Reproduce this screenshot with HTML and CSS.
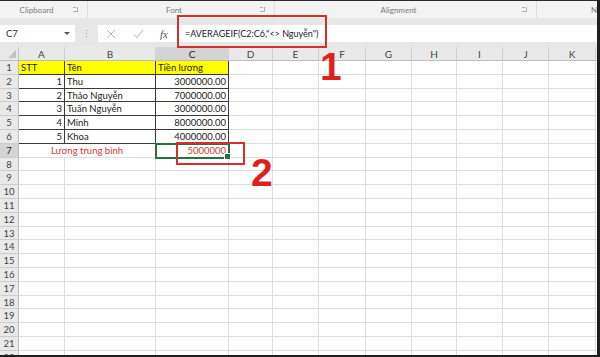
FILE: index.html
```html
<!DOCTYPE html>
<html lang="vi">
<head>
    <meta charset="UTF-8">
    <meta name="viewport" content="width=device-width, initial-scale=1.0">
    <title>AVERAGEIF</title>
    <link rel="stylesheet" href="styles.css">
</head>
<body>
    <div class="window">
        <div class="ribbon">
            <div class="group g-clip"><span class="glabel">Clipboard</span><span class="launch"></span></div>
            <div class="group g-font"><span class="glabel">Font</span><span class="launch"></span></div>
            <div class="group g-align"><span class="glabel">Alignment</span><span class="launch"></span></div>
            <div class="group g-num"><span class="glabel">N</span></div>
        </div>

        <div class="fbar">
            <div class="namebox"><span>C7</span><span class="caret"></span></div>
            <div class="grip"><i></i><i></i><i></i></div>
            <div class="fx-box">
                <svg class="ico ico-x" width="10" height="10" viewBox="0 0 10 10"><path d="M1 1L9 9M9 1L1 9" /></svg>
                <svg class="ico ico-ok" width="11" height="10" viewBox="0 0 11 10"><path d="M1 5.5L4 8.5L10 1" /></svg>
                <span class="fx">fx</span>
                <div class="formula">=AVERAGEIF(C2:C6,"&lt;&gt; Nguyễn")</div>
            </div>
        </div>

        <div class="sheet" id="sheet"></div>

        <div class="mark mark-formula"></div>
        <div class="mark mark-cell"></div>
        <div class="num num-1">1</div>
        <div class="num num-2">2</div>
    </div>

    <script>
        const cols = ['A', 'B', 'C', 'D', 'E', 'F', 'G', 'H', 'I', 'J', 'K'];
        const data = {
            1: [['STT', 'hd'], ['Tên', 'hd'], ['Tiền lương', 'hd']],
            2: [['1', 'r'], ['Thu', ''], ['3000000.00', 'r']],
            3: [['2', 'r'], ['Thảo Nguyễn', ''], ['7000000.00', 'r']],
            4: [['3', 'r'], ['Tuấn Nguyễn', ''], ['3000000.00', 'r']],
            5: [['4', 'r'], ['Minh', ''], ['8000000.00', 'r']],
            6: [['5', 'r'], ['Khoa', ''], ['4000000.00', 'r']]
        };

        const sheet = document.getElementById('sheet');

        function cell(cls, text) {
            const div = document.createElement('div');
            div.className = cls;
            if (text) div.textContent = text;
            sheet.appendChild(div);
            return div;
        }

        // hàng tiêu đề cột
        cell('corner');
        cols.forEach(c => cell(c === 'C' ? 'colhead active' : 'colhead', c));
        cell('colhead filler');

        for (let r = 1; r <= 22; r++) {
            cell(r === 7 ? 'rowhead active' : 'rowhead', String(r));
            if (data[r]) {
                data[r].forEach(([text, kind]) => cell('cell tb ' + kind, text));
                for (let i = 3; i < cols.length; i++) cell('cell');
            } else if (r === 7) {
                cell('cell merged red', 'Lương trung bình');
                cell('cell r red sel', '5000000');
                for (let i = 3; i < cols.length; i++) cell('cell');
            } else {
                cols.forEach(() => cell('cell'));
            }
            cell('cell filler');
        }
    </script>
</body>
</html>
```

FILE: styles.css
```css
* {
    margin: 0;
    padding: 0;
    box-sizing: border-box;
}

body {
    font-family: Lato, "Noto Sans", sans-serif;
    background: #fff;
}

.window {
    width: 600px;
    height: 357px;
    position: relative;
    overflow: hidden;
    display: flex;
    flex-direction: column;
    border-top: 1px solid #2b2b2b;
    border-right: 3px solid #1e1e1e;
    border-bottom: 2px solid #1e1e1e;
    background: #fff;
}

/* ribbon */
.ribbon {
    display: flex;
    height: 17px;
    flex: none;
    background: #f3f3f3;
    font-size: 8px;
    color: #7a7a7a;
}

.group {
    display: flex;
    align-items: center;
    border-right: 1px solid #dedede;
    overflow: hidden;
    white-space: nowrap;
}

.g-clip { width: 88px; }
.g-font { width: 187px; }
.g-align { width: 262px; }
.g-num {
    flex: 1;
    border-right: 0;
    padding-left: 54px;
}

.glabel {
    flex: 1;
    text-align: center;
}

.g-num .glabel { text-align: left; }

.launch {
    width: 5px;
    height: 5px;
    margin-right: 9px;
    border-right: 1px solid #b0b0b0;
    border-bottom: 1px solid #b0b0b0;
    position: relative;
}

.launch::after {
    content: "";
    position: absolute;
    left: 0;
    top: 0;
    width: 3px;
    height: 1px;
    background: #b0b0b0;
}

/* formula bar */
.fbar {
    display: flex;
    height: 29px;
    flex: none;
    padding: 7px 0 5px;
    background: #e7e7e7;
}

.namebox {
    width: 75px;
    display: flex;
    align-items: center;
    justify-content: space-between;
    padding: 0 5px 0 6px;
    background: #fff;
    font-size: 9.5px;
    color: #333;
}

.caret {
    width: 0;
    height: 0;
    border-left: 3px solid transparent;
    border-right: 3px solid transparent;
    border-top: 3px solid #555;
}

.grip {
    width: 23px;
    display: flex;
    flex-direction: column;
    align-items: center;
    justify-content: center;
    gap: 2px;
}

.grip i {
    width: 1px;
    height: 1px;
    background: #9a9a9a;
}

.fx-box {
    flex: 1;
    display: flex;
    align-items: center;
    background: #fff;
}

.ico {
    fill: none;
    stroke: #b5b5b5;
    stroke-width: 1;
}

.ico-x { margin-left: 8px; }
.ico-ok { margin-left: 17px; }

.fx {
    margin-left: 16px;
    font-family: "Liberation Serif", serif;
    font-style: italic;
    font-size: 11px;
    color: #555;
}

.formula {
    margin-left: 17px;
    font-size: 9px;
    color: #222;
    white-space: nowrap;
}

/* sheet */
.sheet {
    flex: 1;
    display: grid;
    grid-template-columns: 19px 46px 91px 73px 44px 46px 47px 46px 45px 46px 46px 47px 1fr;
    grid-template-rows: 14px;
    grid-auto-rows: 13.8px;
    overflow: hidden;
    font-size: 9.5px;
    color: #1c1c1c;
}

.corner {
    background: #e9e9e9;
    border-right: 1px solid #c4c4c4;
    border-bottom: 1px solid #bdbdbd;
    position: relative;
}

.corner::after {
    content: "";
    position: absolute;
    right: 2px;
    bottom: 2px;
    border-left: 8px solid transparent;
    border-bottom: 8px solid #c2c2c2;
}

.colhead {
    background: #e9e9e9;
    border-right: 1px solid #cfcfcf;
    border-bottom: 1px solid #bdbdbd;
    text-align: center;
    line-height: 14px;
    font-size: 10px;
    color: #444;
}

.colhead.active {
    background: #d4d4d4;
    color: #222;
}

.rowhead {
    background: #e9e9e9;
    border-right: 1px solid #bdbdbd;
    border-bottom: 1px solid #cdcdcd;
    text-align: center;
    line-height: 13px;
    font-size: 9.5px;
    color: #444;
}

.rowhead.active {
    background: #d4d4d4;
    color: #222;
}

.cell {
    border-right: 1px solid #dcdcdc;
    border-bottom: 1px solid #dcdcdc;
    padding: 0 2px;
    line-height: 13px;
    white-space: nowrap;
    overflow: hidden;
}

.filler { border-right: 0; }

.cell.tb {
    border-right-color: #3a3a3a;
    border-bottom-color: #3a3a3a;
}

.cell.hd { background: #ffff00; }
.cell.r { text-align: right; }

.cell.merged {
    grid-column: span 2;
    text-align: center;
}

.cell.red { color: #d23a32; }

.cell.sel {
    position: relative;
    overflow: visible;
    outline: 2px solid #217346;
    outline-offset: -1px;
}

.cell.sel::after {
    content: "";
    position: absolute;
    right: -3px;
    bottom: -3px;
    width: 5px;
    height: 5px;
    background: #217346;
    border: 1px solid #fff;
}

/* chú thích */
.mark {
    position: absolute;
    border: 2px solid #d3302e;
}

.mark-formula {
    left: 177px;
    top: 14px;
    width: 150px;
    height: 33px;
}

.mark-cell {
    left: 176px;
    top: 141px;
    width: 69px;
    height: 23px;
}

.num {
    position: absolute;
    font-family: "Liberation Sans", Arial, sans-serif;
    font-weight: bold;
    font-size: 39px;
    line-height: 39px;
    color: #e01f1f;
}

.num-1 {
    left: 320px;
    top: 46px;
}

.num-2 {
    left: 251px;
    top: 152px;
}
```
